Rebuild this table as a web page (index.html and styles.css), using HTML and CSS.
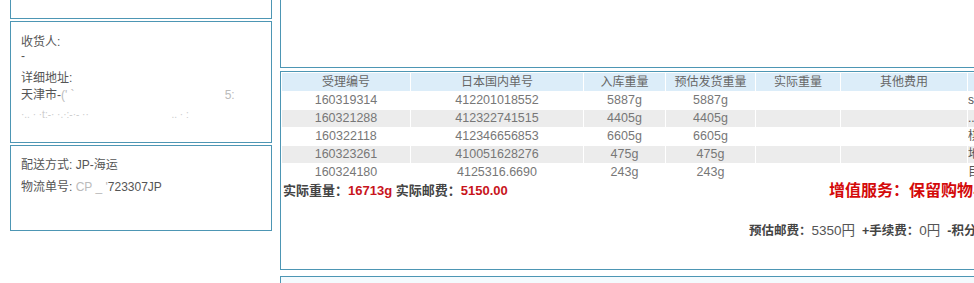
FILE: index.html
```html
<!DOCTYPE html>
<html lang="zh-CN">
<head>
<meta charset="utf-8">
<title>订单详情</title>
<link rel="stylesheet" href="styles.css">
</head>
<body>
<div class="page">
  <aside class="left">
    <div class="box box-top"></div>
    <div class="box box-addr">
      <div class="field">
        <div class="label">收货人:</div>
        <div class="value dash">-</div>
      </div>
      <div class="field field-addr">
        <div class="label">详细地址:</div>
        <div class="value line">天津市-<span class="faint">(' `</span><span class="faint far">5:</span></div>
        <div class="value line faint2">·.. · ·t:-· ·.·:-·- ·· <span class="far2">.. · :</span></div>
      </div>
    </div>
    <div class="box box-ship">
      <div class="row">配送方式: JP-海运</div>
      <div class="row">物流单号: <span class="faint">CP</span> <span class="faint">_ '</span>723307JP</div>
    </div>
  </aside>
  <main class="right">
    <div class="panel panel-top"></div>
    <div class="panel panel-table">
      <table class="items">
        <colgroup>
          <col class="c1"><col class="c2"><col class="c3"><col class="c4"><col class="c5"><col class="c6"><col class="c7">
        </colgroup>
        <thead>
          <tr><th>受理编号</th><th>日本国内单号</th><th>入库重量</th><th>预估发货重量</th><th>实际重量</th><th>其他费用</th><th></th></tr>
        </thead>
        <tbody>
          <tr><td>160319314</td><td>412201018552</td><td>5887g</td><td>5887g</td><td></td><td></td><td class="note">s</td></tr>
          <tr class="alt"><td>160321288</td><td>412322741515</td><td>4405g</td><td>4405g</td><td></td><td></td><td class="note">..</td></tr>
          <tr><td>160322118</td><td>412346656853</td><td>6605g</td><td>6605g</td><td></td><td></td><td class="note">棋</td></tr>
          <tr class="alt"><td>160323261</td><td>410051628276</td><td>475g</td><td>475g</td><td></td><td></td><td class="note">地</td></tr>
          <tr><td>160324180</td><td>4125316.6690</td><td>243g</td><td>243g</td><td></td><td></td><td class="note">目</td></tr>
        </tbody>
      </table>
      <div class="summary">
        <div class="totals">实际重量：<span class="red">16713g</span> 实际邮费：<span class="red">5150.00</span></div>
        <div class="service">增值服务：保留购物小票</div>
      </div>
      <div class="fees">预估邮费：<span class="num">5350円</span> &nbsp;+手续费：<span class="num">0円</span> &nbsp;-积分抵扣：<span class="num">0円</span></div>
    </div>
    <div class="panel panel-next"></div>
  </main>
</div>
</body>
</html>
```
FILE: styles.css
```css
html, body {
  margin: 0;
  padding: 0;
  background: #fff;
  overflow: hidden;
}
body {
  font-family: "Liberation Sans", "Noto Sans CJK SC", sans-serif;
  font-size: 12px;
  color: #555;
}
.page {
  display: flex;
  gap: 8px;
  padding-left: 10px;
  width: 1400px;
}
.left {
  flex: none;
  width: 262px;
  display: flex;
  flex-direction: column;
}
.box, .panel {
  box-sizing: border-box;
  border: 1px solid #4d96b4;
}
.box-top {
  border-top: 0;
  height: 19px;
}
.box-addr {
  margin-top: 2px;
  height: 122px;
  padding: 13px 10px 0;
}
.box-ship {
  margin-top: 2px;
  height: 86px;
  padding: 8px 10px 0;
}
.field .label,
.field .value {
  line-height: 15px;
  white-space: nowrap;
}
.field .dash {
  line-height: 12px;
}
.field-addr {
  margin-top: 9px;
}
.field-addr .line {
  line-height: 19px;
}
.faint {
  color: #bbb;
}
.faint2 {
  color: #ccc;
  font-size: 10px;
}
.far {
  margin-left: 150px;
}
.far2 {
  margin-left: 80px;
}
.row {
  line-height: 22px;
  white-space: nowrap;
}
.right {
  flex: none;
  width: 1000px;
  display: flex;
  flex-direction: column;
}
.panel-top {
  border-top: 0;
  height: 68px;
}
.panel-table {
  margin-top: 3px;
  height: 199px;
}
.panel-next {
  margin-top: 6px;
  height: 40px;
  background: #f4fafd;
}
.items {
  border-collapse: separate;
  border-spacing: 1px;
  table-layout: fixed;
  width: 888px;
}
.c1 { width: 128px; }
.c2 { width: 172px; }
.c3 { width: 81px; }
.c4 { width: 89px; }
.c5 { width: 84px; }
.c6 { width: 126px; }
.c7 { width: 200px; }
.items th {
  background: #dcedf9;
  color: #666;
  font-weight: normal;
  font-size: 12px;
  height: 18px;
  line-height: 18px;
  padding: 0;
  text-align: center;
}
.items td {
  height: 17px;
  line-height: 17px;
  padding: 0;
  text-align: center;
  color: #777;
  font-size: 12.5px;
  white-space: nowrap;
  overflow: hidden;
}
.items tr.alt td {
  background: #ececec;
}
.items td.note {
  text-align: left;
  color: #555;
  font-size: 12px;
}
.summary {
  display: flex;
  align-items: center;
  height: 18px;
  white-space: nowrap;
}
.totals {
  flex: none;
  width: 548px;
  padding-left: 2px;
  box-sizing: border-box;
  font-weight: bold;
  font-size: 13px;
  color: #444;
  line-height: 18px;
}
.red {
  color: #c8141c;
}
.service {
  flex: none;
  font-size: 16px;
  font-weight: bold;
  color: #d40a0a;
  line-height: 18px;
}
.fees {
  margin-top: 22px;
  padding-left: 468px;
  line-height: 18px;
  font-size: 12.5px;
  font-weight: bold;
  color: #444;
  white-space: nowrap;
}
.fees .num {
  font-weight: normal;
  font-size: 13.5px;
  color: #555;
}
```
